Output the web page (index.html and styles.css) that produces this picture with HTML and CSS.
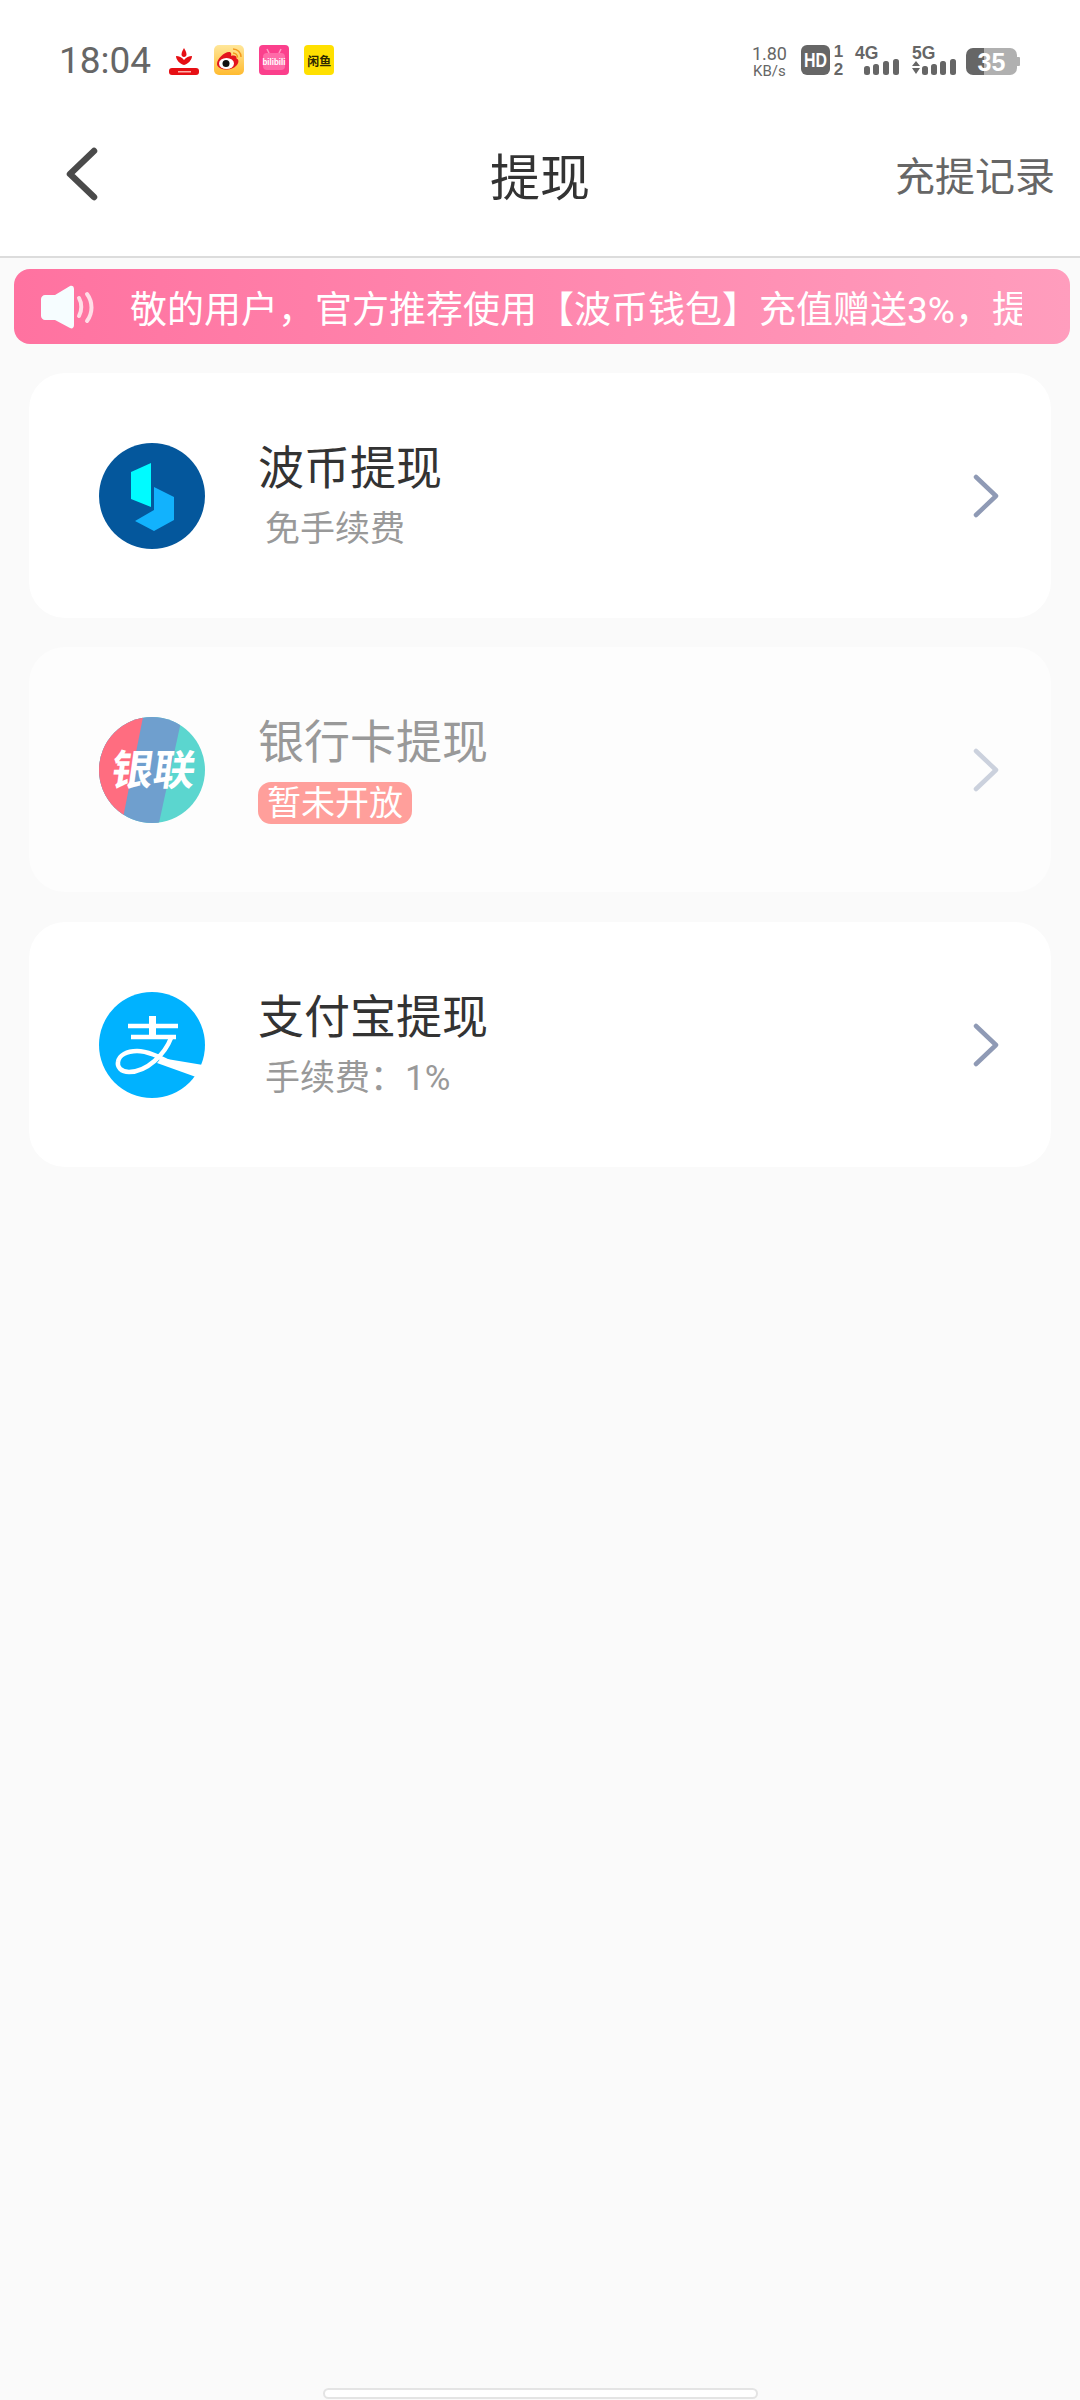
FILE: index.html
```html
<!DOCTYPE html>
<html lang="zh-CN">
<head>
  <meta charset="UTF-8" />
  <meta name="viewport" content="width=device-width, initial-scale=1.0" />
  <title>提现</title>
  <link rel="stylesheet" href="styles.css">
</head>
<body>

  <div class="status-bar">
    <div class="status-left">
      <span class="clock">18:04</span>
      <svg width="30" height="30" viewBox="0 0 30 30">
        <path d="M15 3c1 2 2.500 4 2.500 6.500 0 1.500-1 2.500-2.500 2.500s-2.500-1-2.500-2.500C12.500 7 14 5 15 3z" fill="#e60f14"/>
        <path d="M7 11c3 0 6 1.500 8 4 2-2.500 5-4 8-4 0 4-4 8-8 9-4-1-8-5-8-9z" fill="#e60f14"/>
        <rect x="0" y="23" width="30" height="7" rx="3" fill="#e60f14"/>
        <rect x="9" y="26" width="13" height="1.500" fill="#ffb0a8"/>
      </svg>
      <svg width="30" height="30" viewBox="0 0 30 30">
        <defs>
          <linearGradient id="wb" x1="0" y1="0" x2="0" y2="1">
            <stop offset="0" stop-color="#ffe79a"/>
            <stop offset="1" stop-color="#ffbb30"/>
          </linearGradient>
        </defs>
        <rect width="30" height="30" rx="5" fill="url(#wb)"/>
        <path d="M3 19c0-5 7-12 12-12 2.500 0 2.500 2.500 2 4 3-1 6-.5 5.500 2.500 2.500 1 2.500 4 .5 6.500-3 3.500-7 4.500-10 4.500-5.500 0-10-2-10-5.500z" fill="#e3141e"/>
        <ellipse cx="12.500" cy="18.500" rx="7.500" ry="5.500" fill="#fff"/>
        <circle cx="12" cy="18.500" r="3.500" fill="#111"/>
        <path d="M19 4c4.500 0 8 3.500 8 8M19 8c2.500 0 4.500 2 4.500 4.500" fill="none" stroke="#f39a1e" stroke-width="1.500"/>
      </svg>
      <svg width="30" height="30" viewBox="0 0 30 30">
        <rect width="30" height="30" rx="4" fill="#fb3f8c"/>
        <rect x="4" y="8" width="22" height="17" rx="4" fill="#ff6ba8"/>
        <path d="M10 8L8 4M20 8l2-4" stroke="#ff9cc4" stroke-width="1.500"/>
        <text x="15" y="20" class="bili-text" textLength="23" lengthAdjust="spacingAndGlyphs">bilibili</text>
      </svg>
      <span class="tile-yellow">闲鱼</span>
    </div>
    <div class="status-right">
      <div class="speed"><span class="speed-num">1.80</span><span class="speed-unit">KB/s</span></div>
      <svg width="44" height="30" viewBox="0 0 44 30">
        <rect width="29" height="30" rx="6" fill="#666"/>
        <text x="14.500" y="22" class="hd-text" textLength="23" lengthAdjust="spacingAndGlyphs">HD</text>
        <text x="37.500" y="12" class="sim-text">1</text>
        <text x="37.500" y="30" class="sim-text">2</text>
      </svg>
      <svg width="47" height="30" viewBox="0 0 47 30">
        <text x="0" y="14" class="net-text">4G</text>
        <rect x="9" y="21" width="6" height="9" rx="2.500" fill="#666"/>
        <rect x="18" y="19" width="6" height="11" rx="2.500" fill="#666"/>
        <rect x="28" y="16" width="6" height="14" rx="2.500" fill="#666"/>
        <rect x="38" y="14" width="6" height="16" rx="2.500" fill="#666"/>
      </svg>
      <svg width="44" height="30" viewBox="0 0 44 30">
        <text x="0" y="14" class="net-text">5G</text>
        <path d="M4 16l4 5H0zM0 23h8l-4 6z" fill="#666"/>
        <rect x="10" y="21" width="6" height="9" rx="2.500" fill="#666"/>
        <rect x="19" y="19" width="6" height="11" rx="2.500" fill="#666"/>
        <rect x="28" y="16" width="6" height="14" rx="2.500" fill="#666"/>
        <rect x="38" y="14" width="6" height="16" rx="2.500" fill="#666"/>
      </svg>
      <svg width="54" height="30" viewBox="0 0 54 30">
        <path d="M7 3h11v27H7a7 7 0 0 1-7-7V10a7 7 0 0 1 7-7z" fill="#666"/>
        <path d="M18 3h26a7 7 0 0 1 7 7v13a7 7 0 0 1-7 7H18z" fill="#b0b0b0"/>
        <path d="M51 12h2a1 1 0 0 1 1 1v7a1 1 0 0 1-1 1h-2z" fill="#b0b0b0"/>
        <text x="25.500" y="26" class="bat-text">35</text>
      </svg>
    </div>
  </div>

  <div class="nav-bar">
    <div class="nav-side">
      <svg class="nav-back" width="40" height="62" viewBox="0 0 40 62">
        <path d="M30 8L6 31l24 23" fill="none" stroke="#4a4a4a" stroke-width="6.500" stroke-linecap="round" stroke-linejoin="round"/>
      </svg>
    </div>
    <h1 class="nav-title">提现</h1>
    <div class="nav-side nav-right">
      <span class="nav-record">充提记录</span>
    </div>
  </div>

  <div class="notice">
    <svg width="56" height="46" viewBox="0 0 56 46">
      <path d="M4 11h10L29 2c2-1 4 0 4 3v36c0 3-2 4-4 3L14 36H4c-2 0-4-2-4-4V15c0-2 2-4 4-4z" fill="#f6fdff"/>
      <path d="M38 14c3 5 3 13 0 18M46 10c6 8 6 19 0 27" fill="none" stroke="#ffdde7" stroke-width="4" stroke-linecap="round"/>
    </svg>
    <div class="notice-text">敬的用户，官方推荐使用【波币钱包】充值赠送3%，提</div>
  </div>

  <div class="list">
    <div class="card">
      <svg class="logo" width="106" height="106" viewBox="0 0 106 106">
        <circle cx="53" cy="53" r="53" fill="#04579c"/>
        <path d="M32 29L52 20V64L32 56z" fill="#00fbff"/>
        <path d="M55 44L75 54V77L55 88L36 78L55 67z" fill="#12b2fd"/>
      </svg>
      <div class="card-body">
        <div class="card-title">波币提现</div>
        <div class="card-sub">免手续费</div>
      </div>
      <svg class="arrow" width="26" height="44" viewBox="0 0 26 44">
        <path d="M3 3l20 19L3 41" fill="none" stroke="#8f9ab5" stroke-width="4.500" stroke-linecap="round" stroke-linejoin="round"/>
      </svg>
    </div>

    <div class="card card-off">
      <svg class="logo" width="106" height="106" viewBox="0 0 106 106">
        <defs>
          <clipPath id="round"><circle cx="53" cy="53" r="53"/></clipPath>
        </defs>
        <g clip-path="url(#round)">
          <rect width="106" height="106" fill="#5bd6cf"/>
          <path d="M0 0H83L60 106H0z" fill="#6f9fce"/>
          <path d="M0 0H44L23 106H0z" fill="#ff6d80"/>
        </g>
        <text x="53" y="68" class="union-text" transform="skewX(-8) translate(9 0)">银联</text>
      </svg>
      <div class="card-body">
        <div class="card-title">银行卡提现</div>
        <span class="badge">暂未开放</span>
      </div>
      <svg class="arrow" width="26" height="44" viewBox="0 0 26 44">
        <path d="M3 3l20 19L3 41" fill="none" stroke="#cbd1dd" stroke-width="4.500" stroke-linecap="round" stroke-linejoin="round"/>
      </svg>
    </div>

    <div class="card">
      <svg class="logo" width="106" height="106" viewBox="0 0 106 106">
        <circle cx="53" cy="53" r="53" fill="#00b2ff"/>
        <path d="M29 34H79M32 45H77" fill="none" stroke="#fff" stroke-width="4.500"/>
        <path d="M50 24h7v21h-7z" fill="#fff"/>
        <path d="M72 46C66 62 48 80 30 80 22 80 18 75 19 70 20 63 28 59 38 59 50 59 62 66 78 74" fill="none" stroke="#fff" stroke-width="4.500"/>
        <path d="M62 66L104 73 97 85 58 71z" fill="#fff"/>
      </svg>
      <div class="card-body">
        <div class="card-title">支付宝提现</div>
        <div class="card-sub">手续费：1%</div>
      </div>
      <svg class="arrow" width="26" height="44" viewBox="0 0 26 44">
        <path d="M3 3l20 19L3 41" fill="none" stroke="#8f9ab5" stroke-width="4.500" stroke-linecap="round" stroke-linejoin="round"/>
      </svg>
    </div>
  </div>

  <div class="home-bar"></div>

</body>
</html>
```
FILE: styles.css
```css
* {
  box-sizing: border-box;
}

body {
  font-family: Roboto, "Noto Sans CJK SC", sans-serif;
  background: #fafafa;
  margin: 0;
  width: 1080px;
  height: 2400px;
  display: flex;
  flex-direction: column;
}

/* Status bar */
.status-bar {
  height: 120px;
  background: #fff;
  display: flex;
  justify-content: space-between;
  align-items: flex-start;
  padding: 45px 60px 0 59px;
}

.status-bar svg {
  overflow: visible;
}

.status-left {
  display: flex;
  align-items: center;
  gap: 15px;
  height: 30px;
}

.clock {
  font-size: 37px;
  color: #666;
  margin-right: 3px;
}

.tile-yellow {
  width: 30px;
  height: 30px;
  border-radius: 4px;
  display: flex;
  align-items: center;
  justify-content: center;
  background: #ffe000;
  color: #2e2800;
  font-size: 12px;
  font-weight: bold;
}

.bili-text {
  font: bold 9px "Liberation Sans", sans-serif;
  fill: #fff;
  text-anchor: middle;
}

.status-right {
  display: flex;
  align-items: flex-start;
  gap: 10px;
  height: 30px;
}

.speed {
  display: flex;
  flex-direction: column;
  align-items: center;
  color: #666;
  margin-right: 4px;
}

.speed-num {
  font-size: 18px;
  line-height: 17px;
}

.speed-unit {
  font-size: 15px;
  line-height: 18px;
}

.hd-text {
  font: bold 21px "Liberation Sans", sans-serif;
  fill: #fff;
  text-anchor: middle;
}

.sim-text {
  font: bold 17px "Liberation Sans", sans-serif;
  fill: #666;
  text-anchor: middle;
}

.net-text {
  font: bold 17.5px "Liberation Sans", sans-serif;
  fill: #666;
}

.bat-text {
  font: bold 25px "Liberation Sans", sans-serif;
  fill: #fff;
  text-anchor: middle;
}

/* Nav */
.nav-bar {
  height: 138px;
  padding-bottom: 28px;
  background: #fff;
  border-bottom: 2px solid #dcdcdc;
  display: flex;
  align-items: center;
}

.nav-side {
  flex: 1;
  display: flex;
}

.nav-right {
  justify-content: flex-end;
}

.nav-back {
  margin-left: 64px;
}

.nav-title {
  margin: 0;
  font-size: 50px;
  font-weight: normal;
  color: #333;
}

.nav-record {
  margin-right: 25px;
  font-size: 40px;
  color: #666;
}

/* Notice */
.notice {
  height: 75px;
  margin: 11px 10px 0 14px;
  padding: 0 48px 0 27px;
  border-radius: 16px;
  background: linear-gradient(90deg, #ff72a0, #ff9dbd);
  display: flex;
  align-items: center;
  gap: 33px;
}

.notice svg {
  flex-shrink: 0;
}

.notice-text {
  flex: 1;
  font-size: 37px;
  color: #fff;
  white-space: nowrap;
  overflow: hidden;
}

/* Cards */
.list {
  margin: 29px 29px 0;
  display: flex;
  flex-direction: column;
  gap: 29px;
}

.card {
  height: 245px;
  background: #fff;
  border-radius: 36px;
  display: flex;
  align-items: center;
  padding: 0 52px 0 70px;
}

.card-off {
  background: #fdfdfd;
  margin-bottom: 1px;
}

.logo {
  flex-shrink: 0;
}

.card-body {
  flex: 1;
  margin-left: 53px;
  display: flex;
  flex-direction: column;
  align-items: flex-start;
}

.card-off .card-body {
  padding-bottom: 4px;
}

.card-title {
  font-size: 46px;
  line-height: 60px;
  color: #333;
}

.card-sub {
  margin: 9px 0 0 7px;
  font-size: 35px;
  line-height: 46px;
  color: #999;
}

.card-off .card-title {
  color: #999;
}

.badge {
  margin-top: 10px;
  padding: 0 9px;
  height: 42px;
  line-height: 42px;
  border-radius: 13px;
  background: #ff9f9b;
  color: #fff;
  font-size: 34px;
}

.union-text {
  font: bold 42px "Noto Sans CJK SC", sans-serif;
  fill: #fff;
  text-anchor: middle;
}

/* Home indicator */
.home-bar {
  width: 435px;
  height: 11px;
  margin: auto auto 1px;
  border: 2px solid #e4e4e4;
  border-radius: 6px;
  background: #fff;
}
```
